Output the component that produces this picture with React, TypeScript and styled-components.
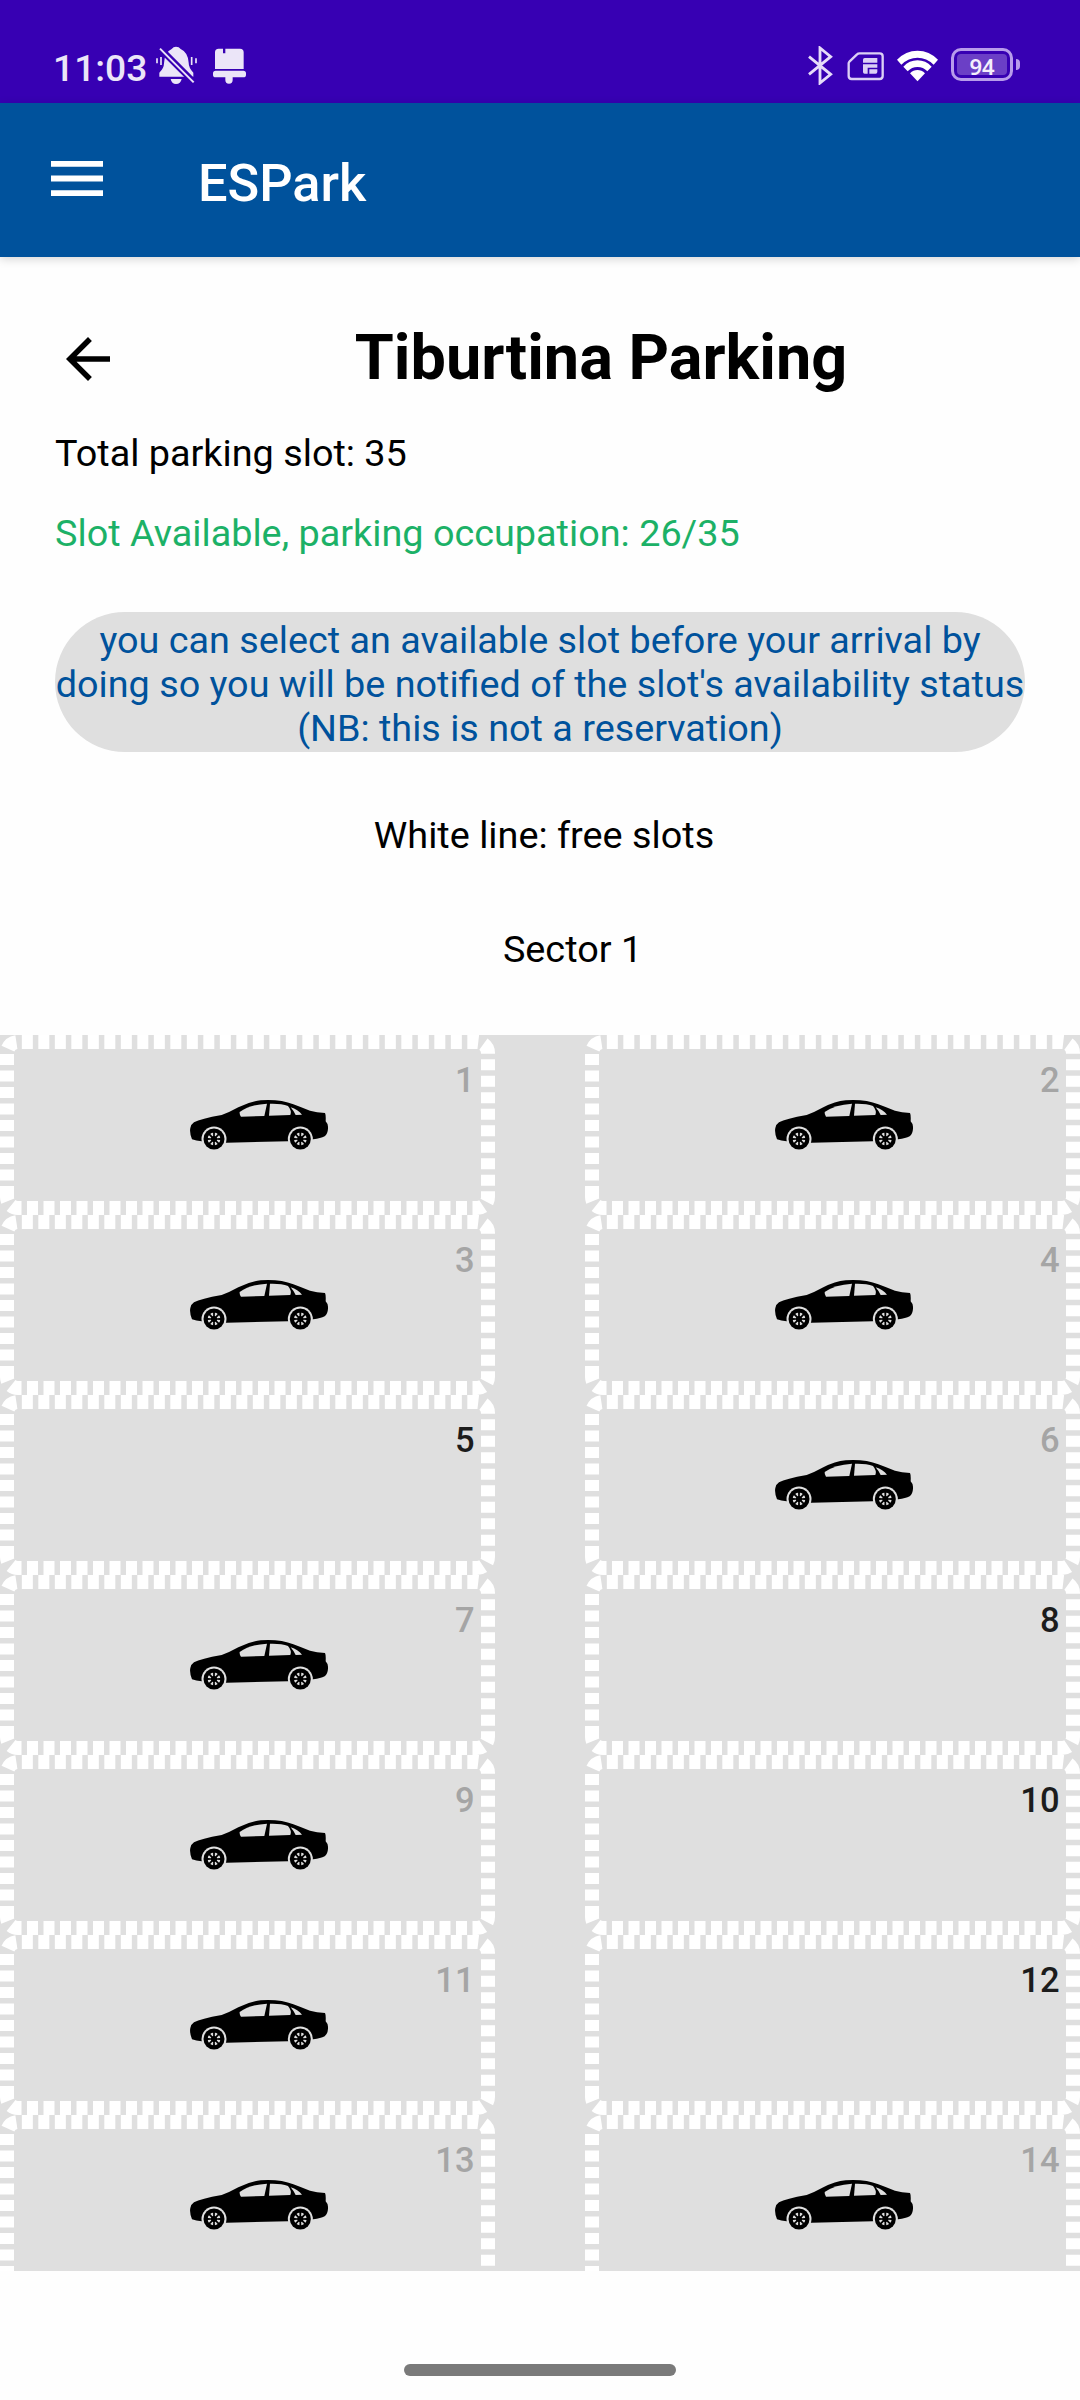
import React from "react";
import styled, { createGlobalStyle } from "styled-components";

const GlobalStyle = createGlobalStyle`
  html, body { margin: 0; padding: 0; background: #fff; }
  * { box-sizing: border-box; }
`;

const Screen = styled.div`
  display: flex;
  flex-direction: column;
  width: 1080px;
  height: 2400px;
  overflow: hidden;
  background: #fefefe;
  color: #000;
  font-family: Roboto, "Liberation Sans", sans-serif;
`;

const StatusBar = styled.header`
  flex: none;
  display: flex;
  align-items: flex-start;
  justify-content: space-between;
  height: 103px;
  padding: 46px 60px 0 53px;
  background: #3700b3;
`;

const StatusGroup = styled.div`
  display: flex;
  align-items: flex-start;
`;

const Clock = styled.span`
  width: 103px;
  font-size: 37.2px;
  font-weight: 500;
  line-height: 44px;
  color: #ebe5f8;
  white-space: nowrap;
`;

const StatusIcon = styled.svg<{ $gap?: number }>`
  display: block;
  flex: none;
  margin-left: ${(p) => p.$gap ?? 0}px;
`;

const Battery = styled.div`
  display: flex;
  align-items: center;
  height: 33px;
  margin: 2px 0 0 13px;
`;

const BatteryBody = styled.div`
  display: flex;
  width: 62px;
  height: 33px;
  padding: 3px;
  border: 3px solid #b89ceb;
  border-radius: 10px;
`;

const BatteryLevel = styled.span`
  flex: 1;
  border-radius: 4px;
  background: #6b3fc6;
  color: #f4effc;
  font-family: "Noto Sans", sans-serif;
  font-size: 22px;
  font-weight: 600;
  line-height: 24px;
  text-align: center;
`;

const BatteryNub = styled.div`
  width: 4px;
  height: 11px;
  margin-left: 3px;
  border-radius: 0 5px 5px 0;
  background: #b89ceb;
`;

const AppBar = styled.nav`
  flex: none;
  display: flex;
  align-items: center;
  height: 154px;
  padding-left: 51px;
  background: #00529c;
  box-shadow: 0 2px 9px rgba(0, 0, 0, 0.17);
  z-index: 1;
`;

const MenuButton = styled.button`
  display: block;
  width: 52px;
  height: 35px;
  margin-bottom: 3px;
  padding: 0;
  border: 0;
  background: none;
  color: #fff;
`;

const AppTitle = styled.h1`
  margin: 6px 0 0 95px;
  font-size: 52.3px;
  font-weight: 500;
  line-height: 60px;
  color: #fff;
`;

const Page = styled.main`
  flex: none;
  display: flex;
  flex-direction: column;
  padding: 65px 55px 0;
  height: 778px;
`;

const TitleRow = styled.div`
  display: flex;
  align-items: center;
  height: 74px;
`;

const BackButton = styled.button`
  flex: none;
  width: 66px;
  height: 66px;
  padding: 0;
  border: 0;
  background: none;
`;

const PageTitle = styled.h2`
  flex: 1;
  margin: 0 0 3px 56px;
  font-size: 63px;
  font-weight: 700;
  line-height: 74px;
  text-align: center;
  white-space: nowrap;
`;

const InfoLine = styled.p<{ $color?: string; $top: number }>`
  margin: ${(p) => p.$top}px 0 0;
  font-size: 37.8px;
  line-height: 46px;
  color: ${(p) => p.$color ?? "#000"};
  white-space: nowrap;
`;

const Notice = styled.div`
  height: 140px;
  margin-top: 56px;
  padding-top: 6px;
  border-radius: 70px;
  background: #dfdfdf;
  color: #00529c;
  font-size: 37.75px;
  line-height: 44px;
  text-align: center;
  white-space: nowrap;
`;

const Legend = styled(InfoLine)<{ $shift: number }>`
  align-self: center;
  padding-left: ${(p) => p.$shift}px;
`;

const Lot = styled.section`
  flex: none;
  height: 1236px;
  overflow: hidden;
  background: #dfdfdf;
`;

const SlotGrid = styled.div`
  display: grid;
  grid-template-columns: 495px 495px;
  column-gap: 90px;
  grid-auto-rows: 180px;
`;

const Slot = styled.div`
  display: grid;
  grid-template: 180px / 495px;
`;

const SlotOutline = styled.svg`
  grid-area: 1 / 1;
`;

const SlotBody = styled.div`
  grid-area: 1 / 1;
  display: flex;
  justify-content: space-between;
  padding: 25px 20.5px 0 190px;
`;

const CarIcon = styled.svg`
  display: block;
  margin-top: 40px;
`;

const SlotNumber = styled.span<{ $free: boolean }>`
  margin-left: auto;
  font-size: 34.5px;
  font-weight: 500;
  line-height: 40px;
  color: ${(p) => (p.$free ? "#1c1c1c" : "#a5a5a5")};
`;

const GestureArea = styled.footer`
  flex: 1;
  display: flex;
  justify-content: center;
  padding-top: 93px;
`;

const GesturePill = styled.div`
  width: 272px;
  height: 12px;
  border-radius: 6px;
  background: #7a7a7a;
`;

const spokes = [0, 45, 90, 135, 180, 225, 270, 315];

function Wheel({ cx }: { cx: number }) {
  return (
    <g transform={`translate(${cx} 177)`}>
      <circle r="37.5" fill="#dfdfdf" />
      <circle r="31.5" fill="#000" />
      {spokes.map((a) => (
        <path key={a} d="M-4.5-18.2Q0-20 4.5-18.2L1.2-9.5H-1.2Z" fill="#dfdfdf" transform={`rotate(${a + 22.5})`} />
      ))}
    </g>
  );
}

function Car() {
  return (
    <CarIcon width="138" height="50" viewBox="60 60 414 150">
      <path d="M95 184Q78 182 66 178Q58 158 61 144Q64 132 72 127Q92 116 155 105Q180 96 205 82Q240 64 272 61Q330 57 370 73Q396 83 420 92Q440 97 465 99Q468 104 467 124Q475 132 474 146Q473 162 464 169Q452 175 430 178L354 184L170 188Z" />
      <path d="M209 96Q240 74 291 71L283 108L213 110Q208 104 209 96Z" fill="#dfdfdf" />
      <path d="M300 71Q334 70 354 78Q366 92 361 105L297 107Z" fill="#dfdfdf" />
      <path d="M362 82Q384 89 396 104L377 105Q372 94 362 82Z" fill="#dfdfdf" />
      <Wheel cx={132} />
      <Wheel cx={391} />
    </CarIcon>
  );
}

function Outline() {
  return (
    <SlotOutline width="495" height="180" viewBox="0 0 495 180" fill="none">
      <path
        d="M7 162V18A11 11 0 0 1 18 7H477A11 11 0 0 1 488 18V162A11 11 0 0 1 477 173H18A11 11 0 0 1 7 162Z"
        stroke="#fff"
        strokeWidth="14"
        strokeDasharray="11 5.5"
      />
    </SlotOutline>
  );
}

const FREE_SLOTS = new Set([5, 8, 10, 12]);
const SLOTS = Array.from({ length: 14 }, (_, i) => i + 1);

export default function App() {
  return (
    <Screen>
      <GlobalStyle />
      <StatusBar>
        <StatusGroup>
          <Clock>11:03</Clock>
          <StatusIcon width="41" height="38" viewBox="467 138 123 114" fill="#ebe5f8">
            <path d="M527 140Q536 140 541 147Q563 157 565 188Q565 203 579 218V230H477V218Q491 205 491 190Q492 157 514 147Q519 140 527 140ZM511 237H544Q541 252 527 252Q514 252 511 237Z" />
            <path d="M477 143L583 249" stroke="#3700b3" strokeWidth="19" />
            <path d="M479 146L580 247" stroke="#ebe5f8" strokeWidth="6" />
            <path d="M470 175V190M482 171V195M574 171V195M587 175V190" stroke="#ebe5f8" strokeWidth="5" />
          </StatusIcon>
          <StatusIcon $gap={16} width="33" height="38" viewBox="639 138 99 114" fill="#ebe5f8">
            <path d="M656 146H669V160H676V146H720Q731 146 731 157V207H645V157Q645 146 656 146Z" />
            <path d="M647 212H730Q738 212 738 220V224Q738 232 730 232H698V240Q698 251 687 251Q676 251 676 240V232H647Q639 232 639 224V220Q639 212 647 212Z" />
          </StatusIcon>
        </StatusGroup>
        <StatusGroup>
          <StatusIcon width="25" height="39" viewBox="146 138 75 117" fill="none" stroke="#e6dcf9" strokeWidth="8.5">
            <path d="M149 170L214 223L182 249V144L214 170L149 223" />
          </StatusIcon>
          <StatusIcon $gap={14} width="37" height="39" viewBox="263 138 111 117">
            <path
              d="M301 160H361Q370 160 370 169V228Q370 237 361 237H277Q268 237 268 228V190Q268 187 271 184L293 163Q296 160 301 160Z"
              fill="none"
              stroke="#dccff6"
              strokeWidth="7"
            />
            <path d="M316 174H354V188H311V179Q311 174 316 174ZM311 193H354V203H325V221H316Q311 221 311 216ZM330 208H354V216Q354 221 349 221H330Z" fill="#dccff6" />
          </StatusIcon>
          <StatusIcon $gap={13} width="41" height="39" viewBox="411 138 123 117" fill="#fff">
            <path d="M411 179Q437 152 472.500 152Q508 152 534 179L521 194Q500 173 472.500 173Q445 173 424 194Z" />
            <path d="M430 200Q448 181 472.500 181Q497 181 515 200L502 214Q490 201 472.500 201Q455 201 443 214Z" />
            <path d="M450 220Q460 210 472.500 210Q485 210 495 220L472.500 244Z" />
          </StatusIcon>
          <Battery>
            <BatteryBody>
              <BatteryLevel>94</BatteryLevel>
            </BatteryBody>
            <BatteryNub />
          </Battery>
        </StatusGroup>
      </StatusBar>
      <AppBar>
        <MenuButton aria-label="Menu">
          <svg width="52" height="35" viewBox="0 0 18 12" preserveAspectRatio="none" fill="currentColor" display="block">
            <path d="M0 0H18V2H0ZM0 5H18V7H0ZM0 10H18V12H0Z" />
          </svg>
        </MenuButton>
        <AppTitle>ESPark</AppTitle>
      </AppBar>
      <Page>
        <TitleRow>
          <BackButton aria-label="Back">
            <svg width="66" height="66" viewBox="0 0 24 24" display="block">
              <path d="M20 11H7.830l5.590-5.590L12 4l-8 8 8 8 1.410-1.410L7.830 13H20v-2z" />
            </svg>
          </BackButton>
          <PageTitle>Tiburtina Parking</PageTitle>
        </TitleRow>
        <InfoLine $top={34}>Total parking slot: 35</InfoLine>
        <InfoLine $top={34} $color="#1cb167">
          Slot Available, parking occupation: 26/35
        </InfoLine>
        <Notice>
          you can select an available slot before your arrival by
          <br />
          doing so you will be notified of the slot's availability status
          <br />
          (NB: this is not a reservation)
        </Notice>
        <Legend $top={60} $shift={8}>
          White line: free slots
        </Legend>
        <Legend $top={68} $shift={65}>
          Sector 1
        </Legend>
      </Page>
      <Lot>
        <SlotGrid>
          {SLOTS.map((n) => (
            <Slot key={n}>
              <Outline />
              <SlotBody>
                {!FREE_SLOTS.has(n) && <Car />}
                <SlotNumber $free={FREE_SLOTS.has(n)}>{n}</SlotNumber>
              </SlotBody>
            </Slot>
          ))}
        </SlotGrid>
      </Lot>
      <GestureArea>
        <GesturePill />
      </GestureArea>
    </Screen>
  );
}
